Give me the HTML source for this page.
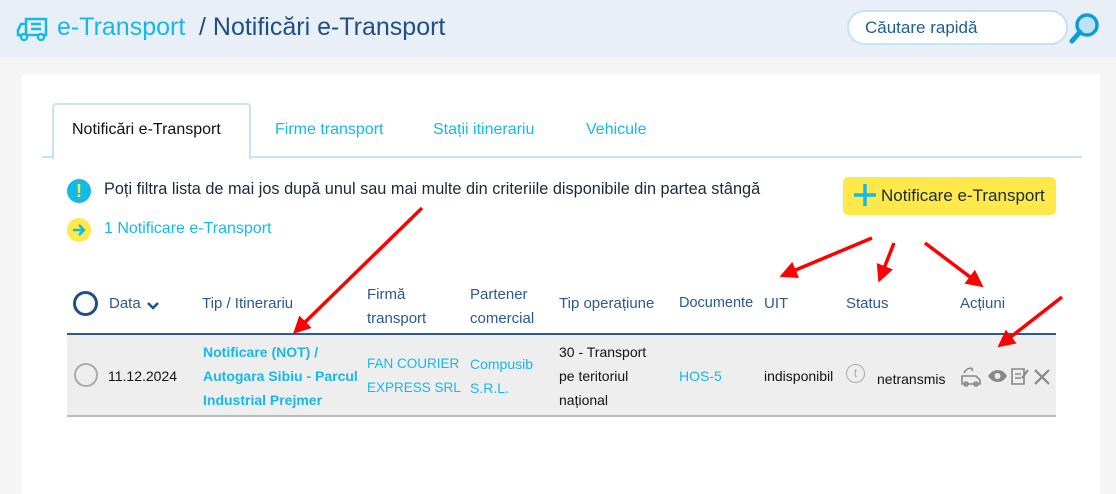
<!DOCTYPE html>
<html><head><meta charset="utf-8"><style>
*{margin:0;padding:0;box-sizing:border-box}
body{width:1116px;height:480px;overflow:hidden;background:#f5f5f5;font-family:"Liberation Sans",sans-serif;position:relative}
.a{position:absolute;white-space:nowrap}
.hd{position:absolute;left:0;top:0;width:1116px;height:57px;background:#e8eff6}
.panel{position:absolute;left:22px;top:74px;width:1078px;height:420px;background:#fff}
.blue{color:#15b9e8}
.dk{color:#1e4f86}
.th{color:#2a5a8f;font-size:15px}
.td{font-size:14px;line-height:24px}
</style></head><body>
<div class="hd"></div>
<svg class="a" style="left:16px;top:16px" width="34" height="26" viewBox="0 0 34 26"><g fill="none" stroke="#15b9e8" stroke-width="2.5"><path d="M10 3h20v16H10z"/><path d="M10 8H5l-3 6v5h8"/><path d="M15 8h10M15 13h10"/></g><circle cx="8" cy="21" r="3" fill="#fff" stroke="#15b9e8" stroke-width="2.5"/><circle cx="25" cy="21" r="3" fill="#fff" stroke="#15b9e8" stroke-width="2.5"/></svg>
<div class="a blue" style="left:57px;top:13px;font-size:25px">e-Transport</div>
<div class="a dk" style="left:199px;top:13px;font-size:25px">/ Notificări e-Transport</div>
<div class="a" style="left:847px;top:10px;width:221px;height:35px;border:2px solid #c2e3f3;border-radius:18px;background:#fff"></div>
<div class="a" style="left:865px;top:18px;font-size:17px;color:#1e5f8f">Căutare rapidă</div>
<svg class="a" style="left:1068px;top:10px" width="34" height="36" viewBox="0 0 34 36"><circle cx="19" cy="15" r="10" fill="#bfe3f3" stroke="#0a9ed6" stroke-width="3.5"/><path d="M12 22L4 31" stroke="#0a9ed6" stroke-width="5" stroke-linecap="round"/></svg>
<div class="panel"></div>
<div class="a" style="left:42px;top:156px;width:1040px;height:2px;background:#c6e4f3"></div>
<div class="a" style="left:52px;top:103px;width:199px;height:56px;border:2px solid #c6e4f3;border-bottom:none;border-radius:4px 4px 0 0;background:#fff"></div>
<div class="a" style="left:72px;top:121px;font-size:16px;color:#111">Notificări e-Transport</div>
<div class="a blue" style="left:275px;top:121px;font-size:16px">Firme transport</div>
<div class="a blue" style="left:433px;top:121px;font-size:16px">Stații itinerariu</div>
<div class="a blue" style="left:586px;top:121px;font-size:16px">Vehicule</div>
<div class="a" style="left:67px;top:179px;width:24px;height:24px;border-radius:50%;background:#15b9e8;color:#ffe94a;font-weight:bold;font-size:18px;text-align:center;line-height:24px">!</div>
<div class="a" style="left:104px;top:180px;font-size:16.3px;color:#1a2a3a">Poți filtra lista de mai jos după unul sau mai multe din criteriile disponibile din partea stângă</div>
<div class="a" style="left:67px;top:218px;width:24px;height:24px;border-radius:50%;background:#ffe94a"></div>
<svg class="a" style="left:71px;top:222px" width="16" height="16" viewBox="0 0 16 16"><path d="M2 8h11M8 3l5 5-5 5" fill="none" stroke="#15b9e8" stroke-width="2.5"/></svg>
<div class="a blue" style="left:104px;top:220px;font-size:16px">1 Notificare e-Transport</div>
<div class="a" style="left:843px;top:177px;width:213px;height:38px;background:#ffe94a;border-radius:5px"></div>
<svg class="a" style="left:853px;top:183px" width="24" height="24" viewBox="0 0 24 24"><path d="M12 1v22M1 12h22" stroke="#15b9e8" stroke-width="3.5"/></svg>
<div class="a" style="left:881px;top:186px;font-size:17px;color:#1a2a3a">Notificare e-Transport</div>
<div class="a" style="left:73px;top:291px;width:25px;height:25px;border:3px solid #1e4f86;border-radius:50%"></div>
<div class="a th" style="left:109px;top:295px">Data</div>
<svg class="a" style="left:146px;top:301px" width="14" height="10" viewBox="0 0 14 10"><path d="M2 2l5 5 5-5" fill="none" stroke="#1e4f86" stroke-width="2.5"/></svg>
<div class="a th" style="left:202px;top:295px">Tip / Itinerariu</div>
<div class="a th" style="left:367px;top:283px;line-height:24px">Firmă<br>transport</div>
<div class="a th" style="left:470px;top:283px;line-height:24px">Partener<br>comercial</div>
<div class="a th" style="left:559px;top:295px">Tip operațiune</div>
<div class="a th" style="left:679px;top:295px;font-size:14.5px">Documente</div>
<div class="a th" style="left:764px;top:295px">UIT</div>
<div class="a th" style="left:846px;top:295px">Status</div>
<div class="a th" style="left:960px;top:295px">Acțiuni</div>
<div class="a" style="left:67px;top:333px;width:989px;height:84px;background:#eeeeee;border-top:2px solid #2a5a8f;border-bottom:2px solid #bbb"></div>
<div class="a" style="left:74px;top:363px;width:24px;height:24px;border:2px solid #aaa;border-radius:50%"></div>
<div class="a td" style="left:108px;top:364px;color:#111">11.12.2024</div>
<div class="a td blue" style="left:203px;top:340px;font-weight:bold">Notificare (NOT) /<br>Autogara Sibiu - Parcul<br>Industrial Prejmer</div>
<div class="a td blue" style="left:367px;top:352px;font-size:13.5px">FAN COURIER<br>EXPRESS SRL</div>
<div class="a td blue" style="left:470px;top:352px">Compusib<br>S.R.L.</div>
<div class="a td" style="left:559px;top:340px;color:#111">30 - Transport<br>pe teritoriul<br>național</div>
<div class="a td blue" style="left:679px;top:364px">HOS-5</div>
<div class="a td" style="left:764px;top:364px;color:#111">indisponibil</div>
<div class="a" style="left:846px;top:364px;width:19px;height:19px;border:1.5px solid #aaa;border-radius:50%;color:#aaa;font-size:12px;text-align:center;line-height:16px">t</div>
<div class="a td" style="left:877px;top:367px;color:#111">netransmis</div>
<svg class="a" style="left:959px;top:364px" width="96" height="24" viewBox="0 0 96 24"><g fill="none" stroke="#888" stroke-width="1.6"><path d="M3 12h14l4 4v4H3z"/><circle cx="7" cy="20" r="2"/><circle cx="17" cy="20" r="2"/><path d="M5 9c3-6 10-6 8-2"/><path d="M30 12c5-7 13-7 17 0c-4 7-12 7-17 0z" fill="#888"/><path d="M53 5h12v15H53zM56 10h6M56 14h6"/><path d="M63 14l6-8" stroke-width="2"/><path d="M76 6l14 14M90 6L76 20" stroke-width="2.2"/></g><circle cx="38.5" cy="12" r="3" fill="#eee"/></svg>
<svg class="a" style="left:0;top:0" width="1116" height="480"><defs><marker id="m" markerWidth="5" markerHeight="5" refX="3" refY="2.5" orient="auto"><path d="M0 0L5 2.5L0 5z" fill="#f00"/></marker></defs><g stroke="#f00" stroke-width="3.5" marker-end="url(#m)"><line x1="422" y1="208" x2="298" y2="329"/><line x1="872" y1="238" x2="786" y2="274"/><line x1="894" y1="243" x2="881" y2="276"/><line x1="925" y1="243" x2="978" y2="283"/><line x1="1062" y1="297" x2="1003" y2="343"/></g></svg>
</body></html>
